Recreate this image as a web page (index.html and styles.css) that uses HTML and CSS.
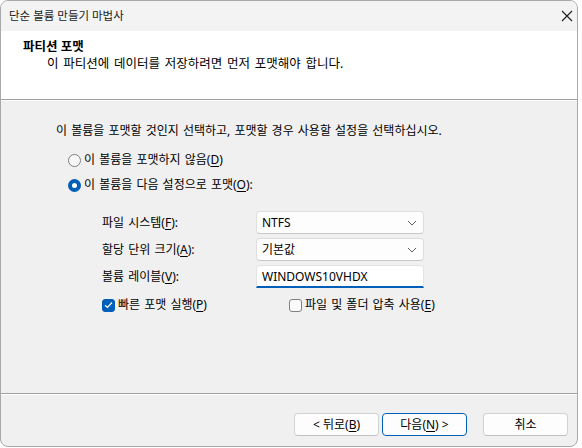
FILE: index.html
```html
<!DOCTYPE html>
<html lang="ko">
<head>
<meta charset="utf-8">
<title>단순 볼륨 만들기 마법사</title>
<link rel="stylesheet" href="styles.css">
</head>
<body>
<div class="window">
  <div class="titlebar">
    <span class="title">단순 볼륨 만들기 마법사</span>
    <svg class="close" width="12" height="12" viewBox="0 0 12 12"><path d="M1 1L11 11M11 1L1 11" stroke="#1b1b1b" stroke-width="1.1" fill="none"/></svg>
  </div>
  <div class="header">
    <div class="h-title">파티션 포맷</div>
    <div class="h-sub">이 파티션에 데이터를 저장하려면 먼저 포맷해야 합니다.</div>
  </div>
  <div class="content">
    <p class="intro">이 볼륨을 포맷할 것인지 선택하고, 포맷할 경우 사용할 설정을 선택하십시오.</p>
    <div class="radio-row first"><span class="radio"></span><span>이 볼륨을 포맷하지 않음(<u>D</u>)</span></div>
    <div class="radio-row"><span class="radio on"></span><span>이 볼륨을 다음 설정으로 포맷(<u>O</u>):</span></div>
    <div class="form">
      <span class="label">파일 시스템(<u>F</u>):</span>
      <div class="combo"><span>NTFS</span><svg width="10" height="6" viewBox="0 0 10 6"><path d="M1 1L5 5L9 1" stroke="#5f5f5f" stroke-width="1" fill="none"/></svg></div>
      <span class="label">할당 단위 크기(<u>A</u>):</span>
      <div class="combo"><span>기본값</span><svg width="10" height="6" viewBox="0 0 10 6"><path d="M1 1L5 5L9 1" stroke="#5f5f5f" stroke-width="1" fill="none"/></svg></div>
      <span class="label">볼륨 레이블(<u>V</u>):</span>
      <div class="textbox">WINDOWS10VHDX</div>
    </div>
    <div class="checks">
      <div class="check-row wide"><span class="check on"><svg width="9" height="8" viewBox="0 0 9 8"><path d="M1 4.2L3.4 6.5L8 1.5" stroke="#fff" stroke-width="1.2" fill="none"/></svg></span><span>빠른 포맷 실행(<u>P</u>)</span></div>
      <div class="check-row"><span class="check"></span><span>파일 및 폴더 압축 사용(<u>E</u>)</span></div>
    </div>
  </div>
  <div class="footer">
    <button class="btn">&lt; 뒤로(<u>B</u>)</button>
    <button class="btn default">다음(<u>N</u>) &gt;</button>
    <button class="btn cancel">취소</button>
  </div>
</div>
</body>
</html>
```

FILE: styles.css
```css
* { box-sizing: border-box; }
html, body { margin: 0; padding: 0; }
body {
  background: #ffffff;
  font-family: "Noto Sans", "Noto Sans CJK KR", sans-serif;
  font-size: 12px;
  line-height: 16px;
  color: #000;
  word-spacing: 1px;
}
u { text-decoration: underline; text-underline-offset: 2px; text-decoration-thickness: 1px; }

.window {
  width: 578px;
  height: 447px;
  border: 1px solid #a9a9a9;
  border-radius: 8px;
  overflow: hidden;
  display: flex;
  flex-direction: column;
  background: #f0f0f0;
}

.titlebar {
  height: 30px;
  flex: none;
  background: #f3f3f3;
  display: flex;
  align-items: center;
  justify-content: space-between;
  padding: 0 4px 0 8px;
}
.title { font-size: 11.5px; color: #1a1a1a; word-spacing: 0; }
.close { width: 12px; height: 12px; }

.header {
  height: 69px;
  flex: none;
  background: #fff;
  border-bottom: 1px solid #a0a0a0;
  padding: 8px 0 0 22px;
  font-size: 12.5px;
  word-spacing: 1.5px;
}
.h-title { font-weight: 700; word-spacing: 0; }
.h-sub { padding-left: 24px; margin-top: 1px; }

.content {
  flex: 1;
  border-top: 1px solid #fff;
  padding: 0 0 0 55px;
}
.intro { margin: 22px 0 0 0; }

.radio-row {
  display: flex;
  align-items: center;
  height: 20px;
  margin: 5px 0 0 12px;
  gap: 3px;
}
.radio-row.first { margin-top: 11px; }
.radio {
  width: 13px;
  height: 13px;
  border-radius: 50%;
  border: 1px solid #7f7f7f;
  background: #f7f7f7;
  flex: none;
}
.radio.on {
  border: 4px solid #005fb8;
  background: #fff;
}

.form {
  display: grid;
  grid-template-columns: 154px 168px;
  grid-auto-rows: 23px;
  row-gap: 4px;
  margin: 16px 0 0 46px;
  align-items: center;
}
.combo {
  height: 23px;
  background: #fdfdfd;
  border: 1px solid #dedede;
  border-bottom-color: #c8c8c8;
  border-radius: 4px;
  display: flex;
  align-items: center;
  justify-content: space-between;
  padding: 0 6px 0 5px;
}
.textbox {
  height: 23px;
  background: #fff;
  border: 1px solid #e3e3e3;
  border-bottom: 2px solid #005fb8;
  border-radius: 4px 4px 0 0;
  display: flex;
  align-items: center;
  padding: 1px 0 0 5px;
  word-spacing: 0;
}

.checks {
  display: flex;
  margin: 7px 0 0 46px;
  height: 20px;
  align-items: center;
}
.check-row { display: flex; align-items: center; gap: 3px; }
.check-row.wide { width: 187px; }
.check {
  width: 13px;
  height: 13px;
  border-radius: 3px;
  border: 1px solid #7f7f7f;
  background: #fbfbfb;
  flex: none;
  display: flex;
  align-items: center;
  justify-content: center;
}
.check.on { background: #005fb8; border-color: #005fb8; }

.footer {
  height: 53px;
  flex: none;
  border-top: 1px solid #a0a0a0;
  box-shadow: inset 0 1px 0 #fff;
  display: flex;
  justify-content: flex-end;
  align-items: flex-start;
  padding: 19px 9px 0 0;
  gap: 3px;
}
.btn {
  width: 85px;
  height: 23px;
  font: inherit;
  word-spacing: 0;
  color: #000;
  background: #fdfdfd;
  border: 1px solid #d3d3d3;
  border-bottom-color: #c2c2c2;
  border-radius: 4px;
  padding: 0;
}
.btn.default { border: 1px solid #005fb8; }
.btn.cancel { margin-left: 13px; }
```
